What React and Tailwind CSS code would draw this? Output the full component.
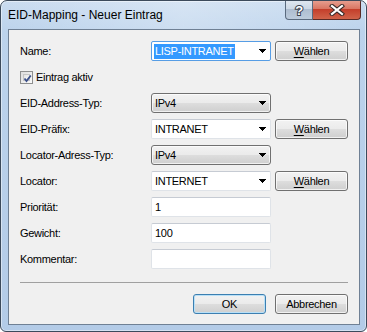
import React from 'react';

const btnBg = 'bg-[linear-gradient(#f2f2f2,#ebebeb_48%,#dddddd_52%,#cfcfcf)]';

const Arrow = () => (
    <svg width="7" height="4" viewBox="0 0 7 4" shapeRendering="crispEdges" className="shrink-0">
        <path d="M0 0h7v1h-1v1h-1v1h-1v1h-1v-1h-1v-1h-1v-1h-1z" fill="#000" />
    </svg>
);

const Label = ({ children }) => <div className="text-black">{children}</div>;

const Button = ({ children, primary, className = '' }) => (
    <div
        className={`h-[20px] w-[73px] flex items-center justify-center rounded-[3px] border ${btnBg} ${
            primary
                ? 'border-[#3c7fb1] shadow-[inset_0_0_0_1px_#b9e0f7]'
                : 'border-[#707070] shadow-[inset_0_0_0_1px_rgba(255,255,255,0.7)]'
        } ${className}`}
    >
        {children}
    </div>
);

const Combo = ({ value, focused }) => (
    <div
        className={`h-[20px] w-[120px] flex items-center justify-between bg-white pl-[2px] pr-[4px] border rounded-[2px] ${
            focused ? 'border-[#569de5]' : 'border-[#dfe3e8] border-t-[#c6cbd3]'
        }`}
    >
        {focused ? (
            <span className="bg-[#3399ff] text-white px-px leading-[15px]">{value}</span>
        ) : (
            <span className="px-px">{value}</span>
        )}
        <Arrow />
    </div>
);

const Dropdown = ({ value }) => (
    <div className={`h-[20px] w-[120px] flex items-center justify-between pl-[3px] pr-[4px] rounded-[3px] border border-[#707070] ${btnBg} shadow-[inset_0_0_0_1px_rgba(255,255,255,0.7)]`}>
        <span>{value}</span>
        <Arrow />
    </div>
);

const TextBox = ({ value }) => (
    <div className="h-[20px] w-[120px] flex items-center bg-white pl-[3px] border border-[#dfe3e8] border-t-[#c6cbd3] rounded-[2px]">
        {value}
    </div>
);

const Waehlen = () => (
    <Button className="ml-[4px] h-[19px]">
        <span>
            <span className="underline underline-offset-[2px]">W</span>ählen
        </span>
    </Button>
);

const Checkbox = () => (
    <div className="w-[13px] h-[13px] border border-[#8e8f8f] bg-[linear-gradient(135deg,#dcdcdc,#fbfbfb)] flex items-center justify-center p-[2px]">
        <div className="w-full h-full border border-[#c5c5c5] bg-[linear-gradient(135deg,#e3e3e3,#f9f9f9)] relative">
            <svg width="11" height="11" viewBox="0 0 11 11" className="absolute -left-[2px] -top-[2px]">
                <path d="M2.5 5.5 L4.5 8 L8.8 2.5" fill="none" stroke="#3a4f8a" strokeWidth="1.8" />
            </svg>
        </div>
    </div>
);

export default function App() {
    return (
        <div className="w-[367px] h-[332px] flex flex-col border border-[#3c4a5b] rounded-t-[7px] rounded-b-[6px] overflow-hidden bg-[linear-gradient(to_bottom,#cadcf0,#bcd3ec_30px,#b3cbe7)] shadow-[inset_0_0_0_1px_rgba(255,255,255,0.45)] font-['Liberation_Sans',Arial,sans-serif] text-[11px] tracking-[-0.3px] text-black select-none">
            {/* Title bar */}
            <div className="h-[28px] flex items-start shrink-0 bg-[linear-gradient(to_right,rgba(255,255,255,0)_0%,rgba(255,255,255,0.25)_50%,rgba(255,255,255,0)_100%)]">
                <div className="self-center pl-[7px] text-[12px] tracking-normal text-black">EID-Mapping - Neuer Eintrag</div>
                <div className="ml-auto mr-[5px] -mt-px flex">
                    <div className="w-[28px] h-[20px] flex items-center justify-center border border-t-0 border-[#5a6a7e] rounded-bl-[4px] bg-[linear-gradient(#e1e8f1,#cdd8e5_45%,#aebdd0_50%,#bccbdc)]">
                        <svg width="12" height="14" viewBox="0 0 12 14">
                            <text x="6" y="12" textAnchor="middle" fontFamily="Liberation Sans, Arial, sans-serif" fontWeight="bold" fontSize="13" fill="#fff" stroke="#3b4250" strokeWidth="2" paintOrder="stroke">?</text>
                        </svg>
                    </div>
                    <div className="w-[48px] h-[20px] flex items-center justify-center border border-t-0 border-l-0 border-[#5a2a25] rounded-br-[4px] bg-[linear-gradient(#e8a293,#d97764_45%,#c43f2b_50%,#d0634a)]">
                        <svg width="16" height="12" viewBox="0 0 16 12">
                            <path d="M3 2 L13 10 M13 2 L3 10" stroke="#3a2a28" strokeWidth="4.2" strokeLinecap="square" />
                            <path d="M3 2 L13 10 M13 2 L3 10" stroke="#fff" strokeWidth="2.2" strokeLinecap="square" />
                        </svg>
                    </div>
                </div>
            </div>

            {/* Client area */}
            <div className="ml-[7px] mr-[6px] mb-[6px] flex-1 flex flex-col border border-[#6f8094] bg-[#f0f0f0] pt-[11px] px-[11px]">
                <div className="grid grid-cols-[131px_120px_1fr] auto-rows-[20px] gap-y-[6px] items-center">
                    <Label>Name:</Label>
                    <Combo value="LISP-INTRANET" focused />
                    <Waehlen />

                    <div className="col-span-3 flex items-center gap-[3px]">
                        <Checkbox />
                        <span>Eintrag aktiv</span>
                    </div>

                    <Label>EID-Address-Typ:</Label>
                    <Dropdown value="IPv4" />
                    <div />

                    <Label>EID-Präfix:</Label>
                    <Combo value="INTRANET" />
                    <Waehlen />

                    <Label>Locator-Adress-Typ:</Label>
                    <Dropdown value="IPv4" />
                    <div />

                    <Label>Locator:</Label>
                    <Combo value="INTERNET" />
                    <Waehlen />

                    <Label>Priorität:</Label>
                    <TextBox value="1" />
                    <div />

                    <Label>Gewicht:</Label>
                    <TextBox value="100" />
                    <div />

                    <Label>Kommentar:</Label>
                    <TextBox value="" />
                    <div />
                </div>

                <div className="mt-[13px] h-px bg-[#a0a0a0]" />

                <div className="mt-[11px] flex justify-end gap-[9px]">
                    <Button primary>OK</Button>
                    <Button>Abbrechen</Button>
                </div>
            </div>
        </div>
    );
}
